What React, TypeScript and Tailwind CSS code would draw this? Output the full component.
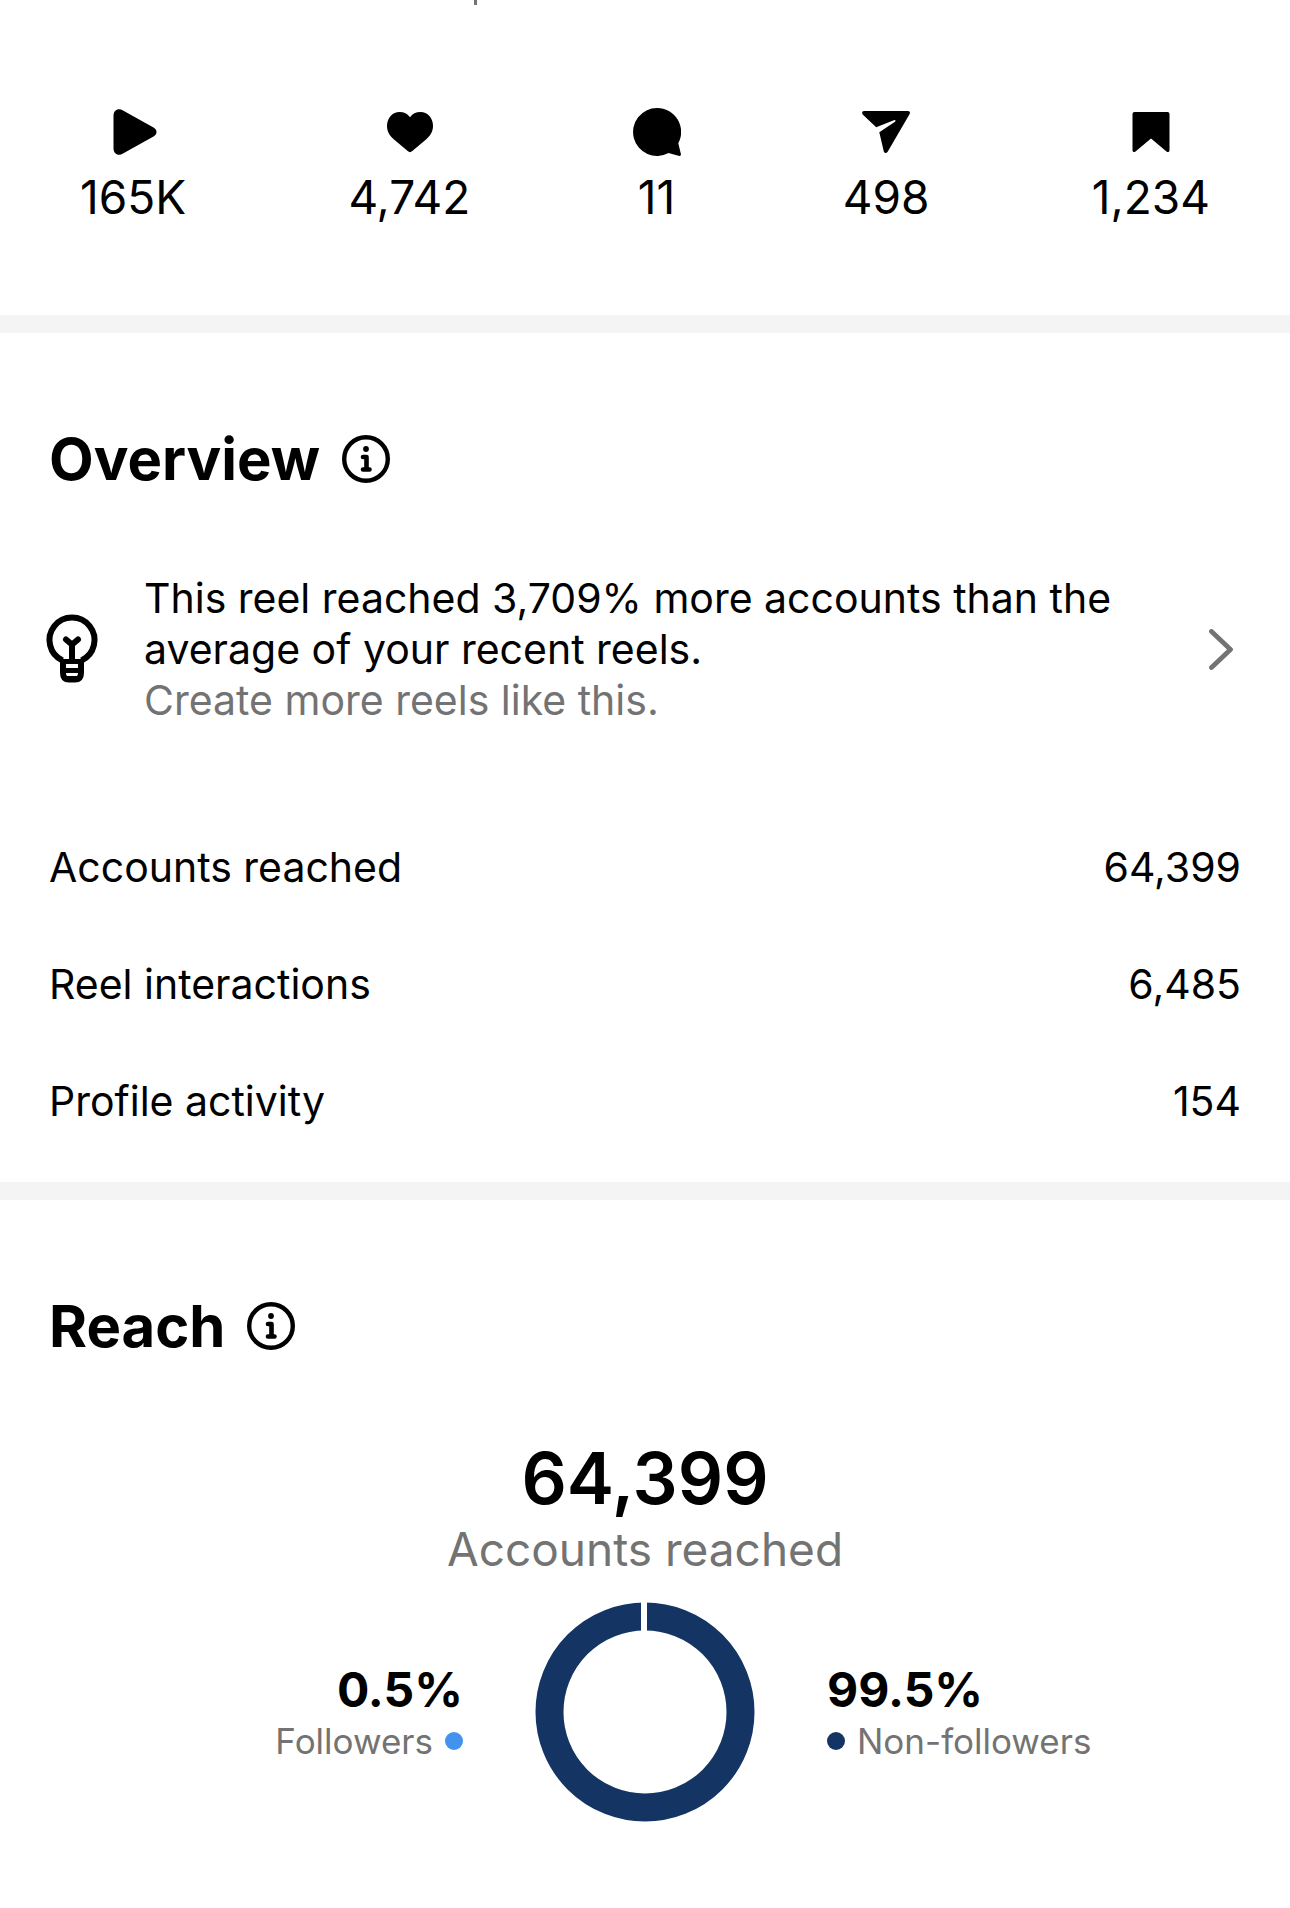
import type { ReactNode } from "react";

const stats = [
  { label: "Plays", value: "165K", icon: <PlayIcon /> },
  { label: "Likes", value: "4,742", icon: <HeartIcon /> },
  { label: "Comments", value: "11", icon: <CommentIcon /> },
  { label: "Shares", value: "498", icon: <ShareIcon /> },
  { label: "Saves", value: "1,234", icon: <BookmarkIcon /> },
];

const overview = [
  { label: "Accounts reached", value: "64,399" },
  { label: "Reel interactions", value: "6,485" },
  { label: "Profile activity", value: "154" },
];

function StatSvg({ children }: { children: ReactNode }) {
  return (
    <svg viewBox="0 0 48 48" className="size-12" fill="currentColor" aria-hidden="true">
      {children}
    </svg>
  );
}

function PlayIcon() {
  return (
    <StatSvg>
      <path d="M4.5 7.5C4.5 2 9.500-.5 14 2.500L44.500 19.500C48.500 22 48.500 26 44.500 28.500L14 45.500C9.500 48.500 4.500 46 4.500 40.500Z" />
    </StatSvg>
  );
}

function HeartIcon() {
  return (
    <StatSvg>
      <path d="M14.500 4C19 4 22.800 5.800 25 9.300C27.200 5.800 31 4 35.500 4C42.500 4 48 10 48 18C48 23.500 45.500 27.500 41 31.500L27 43.300C25.700 44.400 24.300 44.400 23 43.300L9 31.500C4.500 27.500 2 23.500 2 18C2 10 7.500 4 14.500 4Z" />
    </StatSvg>
  );
}

function CommentIcon() {
  return (
    <StatSvg>
      <path d="M24 0A24 24 0 1 0 35.500 45.100L46.300 47.900Q48.300 48 47.900 46L45.300 35.300A24 24 0 0 0 24 0Z" />
    </StatSvg>
  );
}

function ShareIcon() {
  return (
    <StatSvg>
      <path d="M2 3H46Q49 3.300 47.500 6.300L25.800 43.500Q23.500 46.500 21.800 43.500L17.300 24.300L33 13.800Q34.300 12.200 32.500 11.900L14.200 19.200L.7 6.500Q-1 3.500 2 3Z" />
    </StatSvg>
  );
}

function BookmarkIcon() {
  return (
    <StatSvg>
      <path d="M7.500 4H40.500Q42.500 4 42.500 6V42.500Q42 45 39.500 43.500L24 30.500L8.500 43.500Q6 45 5.500 42.500V6Q5.500 4 7.500 4Z" />
    </StatSvg>
  );
}

function InfoIcon() {
  return (
    <svg viewBox="0 0 48 48" className="size-12" fill="none" stroke="currentColor" aria-hidden="true">
      <circle cx="24" cy="24" r="21.800" strokeWidth="4.400" />
      <circle cx="24" cy="14" r="2.900" fill="currentColor" stroke="none" />
      <path d="M21 22H24.500V34.500M21 34.500H27.500" strokeWidth="4.600" strokeLinecap="round" strokeLinejoin="round" />
    </svg>
  );
}

function BulbIcon() {
  return (
    <svg viewBox="3 2 52 70" className="h-[70px] w-13 shrink-0 overflow-visible" fill="none" stroke="currentColor" aria-hidden="true">
      <path d="M16.500 47.500A22.500 22.500 0 1 1 35.500 47.500" strokeWidth="6" />
      <path d="M20 26.500L26 31.500L32 26.500M26 31.500V48" strokeWidth="6" strokeLinecap="round" />
      <path d="M17 47V60Q17 66.500 23 66.500H29Q35 66.500 35 60V47" strokeWidth="6" />
      <path d="M15 48.500H37M17 57.500H35" strokeWidth="5" />
      <path d="M21 65.500H31" strokeWidth="5" />
    </svg>
  );
}

function ChevronIcon() {
  return (
    <svg viewBox="0 0 26 42" className="h-[42px] w-[26px] shrink-0 text-[#737373]" fill="none" stroke="currentColor" aria-hidden="true">
      <path d="M3.500 2.500L22.500 20.500L3.500 38.500" strokeWidth="4.800" strokeLinecap="round" strokeLinejoin="round" />
    </svg>
  );
}

function SectionTitle({ title }: { title: string }) {
  return (
    <div className="flex items-center gap-[22px]">
      <h2 className="text-[58px] leading-[72px] font-bold">{title}</h2>
      <button type="button" aria-label={`About ${title}`}>
        <InfoIcon />
      </button>
    </div>
  );
}

function Divider() {
  return <hr className="h-[18px] border-0 bg-[#f4f4f4]" />;
}

/**
 * Ring split between followers and non-followers
 */
function ReachDonut() {
  return (
    <svg viewBox="0 0 220 220" className="size-[220px]" role="img" aria-label="0.5% followers, 99.5% non-followers">
      <circle cx="110" cy="110" r="95.500" fill="none" stroke="#143564" strokeWidth="28" />
      <rect x="106" y="0" width="6" height="30" fill="#fff" />
    </svg>
  );
}

export default function App() {
  return (
    <main className="min-h-screen bg-white font-['Inter',sans-serif] text-black">
      <section className="relative px-20 pt-[108px] pb-[89px]">
        {/* tail of the meta line separator scrolled under the top edge */}
        <span className="absolute top-0 left-[474px] h-[5px] w-[3px] bg-[#737373]" />
        <ul className="flex justify-between">
          {stats.map((stat) => (
            <li key={stat.label} aria-label={stat.label} className="flex flex-col items-center gap-3">
              {stat.icon}
              <span className="text-[46px] leading-[58px]">{stat.value}</span>
            </li>
          ))}
        </ul>
      </section>

      <Divider />

      <section className="px-[49px] pt-[90px] pb-[55px]">
        <SectionTitle title="Overview" />
        <button type="button" className="mt-[78px] flex w-full items-center pr-[7px] text-left">
          <BulbIcon />
          <span className="ml-[43px] flex-1 text-[41px] leading-[51px]">
            <span className="block max-w-[1000px]">
              This reel reached 3,709% more accounts than the average of your recent reels.
            </span>
            <span className="block text-[#737373]">Create more reels like this.</span>
          </span>
          <ChevronIcon />
        </button>
        <dl className="mt-[116px] space-y-[66px] text-[41px] leading-[51px]">
          {overview.map((row) => (
            <div key={row.label} className="flex justify-between">
              <dt>{row.label}</dt>
              <dd>{row.value}</dd>
            </div>
          ))}
        </dl>
      </section>

      <Divider />

      <section className="px-[49px] pt-[90px] pb-20">
        <SectionTitle title="Reach" />
        <div className="mt-[74px] text-center">
          <p className="text-[71px] leading-[84px] font-semibold">64,399</p>
          <p className="text-[46px] leading-[58px] text-[#737373]">Accounts reached</p>
        </div>
        <div className="mt-6 grid grid-cols-[1fr_220px_1fr] items-center gap-[72px]">
          <div className="flex flex-col items-end">
            <span className="text-[48px] leading-[58px] font-bold">0.5%</span>
            <span className="flex items-center gap-3 text-[35px] leading-[44px] text-[#737373]">
              Followers
              <span className="size-[18px] rounded-full bg-[#4193ef]" />
            </span>
          </div>
          <ReachDonut />
          <div className="flex flex-col items-start">
            <span className="text-[48px] leading-[58px] font-bold">99.5%</span>
            <span className="flex items-center gap-3 text-[35px] leading-[44px] text-[#737373]">
              <span className="size-[18px] rounded-full bg-[#143564]" />
              Non-followers
            </span>
          </div>
        </div>
      </section>
    </main>
  );
}
